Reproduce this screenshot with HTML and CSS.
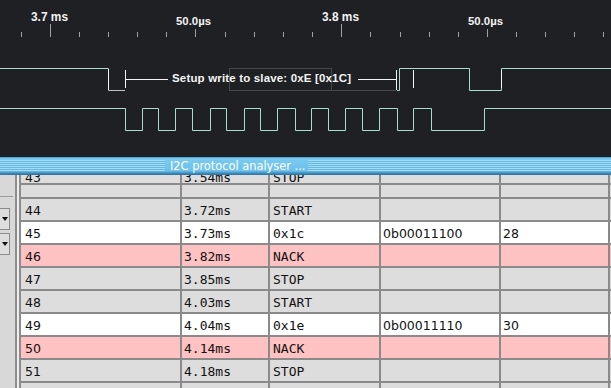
FILE: index.html
```html
<!DOCTYPE html>
<html>
<head>
<meta charset="utf-8">
<link rel="stylesheet" href="styles.css">
</head>
<body>
<div class="scope">
<svg class="scope-svg" width="611" height="157" viewBox="0 0 611 157">
  <g class="ticks">
    <path d="M21.5 32V37M79.5 32V37M108.5 32V37M137.5 32V37M166.5 32V37M225.5 32V37M254.5 32V37M283.5 32V37M312.5 32V37M370.5 32V37M400.5 32V37M429.5 32V37M458.5 32V37M516.5 32V37M545.5 32V37M574.5 32V37M603.5 32V37"/>
    <path d="M50.5 24V37M341.5 24V37M195.5 29V37M487.5 29V37"/>
  </g>
  <g class="labels">
    <text class="big" x="31" y="21" textLength="37" lengthAdjust="spacingAndGlyphs">3.7 ms</text>
    <text class="small" x="176" y="25" textLength="35" lengthAdjust="spacingAndGlyphs">50.0µs</text>
    <text class="big" x="322" y="21" textLength="37" lengthAdjust="spacingAndGlyphs">3.8 ms</text>
    <text class="small" x="468" y="25" textLength="35" lengthAdjust="spacingAndGlyphs">50.0µs</text>
  </g>
  <rect class="box" x="229.5" y="68.5" width="102" height="22"/>
  <path class="box" d="M331.5 90.5H396"/>
  <path class="trace" d="M0 68.5H108"/>
  <path class="trace" d="M397 90.5H399.5V68.5H469.5V90.5H501.5V68.5H611"/>
  <path class="dim" d="M109 90.5H125"/>
  <path class="mark" d="M108.5 68.5V90.5M125.5 70V88M126 79.5H168M358 79.5H396M396.5 70V90M413.5 70V88M501.5 70V88"/>
  <text class="anno" x="172" y="82" textLength="179" lengthAdjust="spacing">Setup write to slave: 0xE [0x1C]</text>
  <path class="trace" d="M0 108.5H125.5V130.5H142.5V108.5H158.5V130.5H175.5V108.5H192.5V130.5H210.5V108.5H226.5V130.5H244.5V108.5H260.5V130.5H277.5V108.5H295.5V130.5H311.5V108.5H328.5V130.5H345.5V108.5H362.5V130.5H379.5V108.5H397.5V130.5H413.5V108.5H431.5V130.5H484.5V108.5H611"/>
</svg>
</div>
<div class="titlebar">
  <div class="stripes stripes-left"></div>
  <span class="title">I2C protocol analyser ...</span>
  <div class="stripes stripes-right"></div>
</div>
<div class="panel">
  <div class="side">
    <div class="side-rule"></div>
    <div class="drop"><span class="arrow"></span></div>
    <div class="drop"><span class="arrow"></span></div>
  </div>
  <div class="frame"></div>
  <div class="table">
    <div class="row frag gray">
      <div class="c c1">43</div><div class="c c2 mono">3.54ms</div><div class="c c3 mono">STOP</div><div class="c c4"></div><div class="c c5"></div><div class="c c6"></div>
    </div>
    <div class="row blank gray">
      <div class="c c1"></div><div class="c c2"></div><div class="c c3"></div><div class="c c4"></div><div class="c c5"></div><div class="c c6"></div>
    </div>
    <div class="row gray">
      <div class="c c1">44</div><div class="c c2 mono">3.72ms</div><div class="c c3 mono">START</div><div class="c c4"></div><div class="c c5"></div><div class="c c6"></div>
    </div>
    <div class="row white">
      <div class="c c1">45</div><div class="c c2 mono">3.73ms</div><div class="c c3 mono">0x1c</div><div class="c c4">0b00011100</div><div class="c c5">28</div><div class="c c6"></div>
    </div>
    <div class="row pink">
      <div class="c c1">46</div><div class="c c2 mono">3.82ms</div><div class="c c3 mono">NACK</div><div class="c c4"></div><div class="c c5"></div><div class="c c6"></div>
    </div>
    <div class="row gray">
      <div class="c c1">47</div><div class="c c2 mono">3.85ms</div><div class="c c3 mono">STOP</div><div class="c c4"></div><div class="c c5"></div><div class="c c6"></div>
    </div>
    <div class="row gray">
      <div class="c c1">48</div><div class="c c2 mono">4.03ms</div><div class="c c3 mono">START</div><div class="c c4"></div><div class="c c5"></div><div class="c c6"></div>
    </div>
    <div class="row white">
      <div class="c c1">49</div><div class="c c2 mono">4.04ms</div><div class="c c3 mono">0x1e</div><div class="c c4">0b00011110</div><div class="c c5">30</div><div class="c c6"></div>
    </div>
    <div class="row pink">
      <div class="c c1">50</div><div class="c c2 mono">4.14ms</div><div class="c c3 mono">NACK</div><div class="c c4"></div><div class="c c5"></div><div class="c c6"></div>
    </div>
    <div class="row gray">
      <div class="c c1">51</div><div class="c c2 mono">4.18ms</div><div class="c c3 mono">STOP</div><div class="c c4"></div><div class="c c5"></div><div class="c c6"></div>
    </div>
    <div class="row gray">
      <div class="c c1"></div><div class="c c2"></div><div class="c c3"></div><div class="c c4"></div><div class="c c5"></div><div class="c c6"></div>
    </div>
  </div>
</div>
</body>
</html>
```
FILE: styles.css
```css
html, body {
  margin: 0;
  padding: 0;
}
body {
  width: 611px;
  height: 388px;
  overflow: hidden;
  background: #d8d8d8;
  font-family: "DejaVu Sans", sans-serif;
}
.scope {
  height: 157px;
  background: #1e2024;
}
.scope-svg {
  display: block;
}
.ticks path {
  stroke: #a0a0a0;
  stroke-width: 1;
  fill: none;
}
.labels text {
  fill: #f2f2f2;
  font-family: "Liberation Sans", sans-serif;
  font-weight: bold;
}
.labels .big {
  font-size: 12.5px;
}
.labels .small {
  font-size: 10.5px;
}
.trace {
  stroke: #a8dcd2;
  stroke-width: 1;
  fill: none;
}
.dim {
  stroke: #b8c4c2;
  stroke-width: 1;
  fill: none;
}
.mark {
  stroke: #f4f4f4;
  stroke-width: 1;
  fill: none;
}
.box {
  stroke: #45484d;
  stroke-width: 1;
  fill: none;
}
.anno {
  fill: #f4f4f4;
  font-family: "Liberation Sans", sans-serif;
  font-weight: bold;
  font-size: 11.5px;
}
.titlebar {
  height: 18px;
  display: flex;
  align-items: stretch;
  background: linear-gradient(#4ea9da 0, #4ea9da 1px, #7ccaf0 1px, #6cc0ea 14px, #3f8fbf 16px, #2f6f98 18px);
}
.stripes {
  margin: 3px 0 4px;
  background: repeating-linear-gradient(#a6dcf6 0, #a6dcf6 1px, #62b8e6 1px, #62b8e6 2px);
}
.stripes-left {
  width: 165px;
}
.stripes-right {
  flex: 1;
  margin-left: 3px;
}
.title {
  color: #ffffff;
  font-size: 11.4px;
  line-height: 18px;
  padding: 0 0 0 5px;
  white-space: nowrap;
}
.panel {
  display: flex;
  height: 213px;
}
.side {
  width: 15px;
  display: flex;
  flex-direction: column;
}
.side-rule {
  margin-top: 21px;
  width: 13px;
  border-top: 1px solid #9a9a9a;
  height: 11px;
}
.drop {
  width: 9px;
  height: 20px;
  border: 1px solid #8a8a8a;
  border-left: none;
  background: #dedede;
  margin-bottom: 3px;
  display: flex;
  align-items: center;
  justify-content: center;
}
.arrow {
  width: 0;
  height: 0;
  border-left: 3px solid transparent;
  border-right: 3px solid transparent;
  border-top: 4px solid #111;
}
.frame {
  width: 2px;
  background: #eeeeee;
  border-left: 2px solid #8c8c8c;
  border-right: 2px solid #8c8c8c;
}
.table {
  flex: 1;
  display: flex;
  flex-direction: column;
  overflow: hidden;
}
.row {
  display: flex;
  height: 21px;
  flex: none;
  border-bottom: 2px solid #8a8a8a;
  font-size: 12.5px;
  line-height: 21px;
  color: #111;
}
.row.frag {
  height: 8px;
  line-height: 5px;
}
.row.blank {
  height: 12px;
}
.gray { background: #dddddd; }
.white { background: #ffffff; }
.pink { background: #ffc2c2; }
.c {
  border-right: 2px solid #8a8a8a;
  padding: 1px 0 0 2px;
  box-sizing: border-box;
  white-space: nowrap;
  overflow: hidden;
  flex: none;
}
.row.frag .c, .row.blank .c {
  padding-top: 0;
}
.mono {
  font-family: "DejaVu Sans Mono", monospace;
  font-size: 13px;
}
.c1 { width: 161px; padding-left: 4px; }
.c2 { width: 88px; }
.c3 { width: 111px; padding-left: 3px; }
.c4 { width: 120px; }
.c5 { width: 109px; }
.c6 { flex: 1; border-right: none; }
```
